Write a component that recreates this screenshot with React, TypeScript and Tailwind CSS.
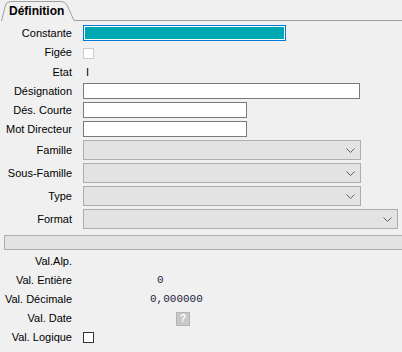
import React from 'react';

const labelFont = { fontFamily: '"Liberation Sans", Arial, sans-serif' };
const monoFont = { fontFamily: '"Liberation Mono", "Courier New", monospace' };

const Chevron: React.FC = () => (
  <svg width="9" height="5" viewBox="0 0 9 5" className="shrink-0">
    <path d="M0.5 0.5 L4.5 4.5 L8.5 0.5" fill="none" stroke="#606060" strokeWidth="1" />
  </svg>
);

const Row: React.FC<{ label: string; h: string; className?: string; children?: React.ReactNode }> = ({ label, h, className = '', children }) => (
  <div className={`flex items-center ${h} ${className}`}>
    <div className="w-[72px] shrink-0 text-right text-[11px] leading-none text-black">{label}</div>
    <div className="ml-[11px] flex items-center h-full">{children}</div>
  </div>
);

const Select: React.FC<{ w: string }> = ({ w }) => (
  <div className={`${w} h-[20px] bg-[#e3e3e3] border border-[#adadad] flex items-center justify-end pr-[5px]`}>
    <Chevron />
  </div>
);

const App: React.FC = () => {
  return (
    <div className="w-[402px] h-[352px] bg-[#f0f0f0] overflow-hidden relative" style={labelFont}>
      {/* Tab header */}
      <div className="flex h-[21px]">
        <div className="relative w-[75px] h-[21px] shrink-0">
          <svg width="75" height="21" viewBox="0 0 75 21" className="absolute inset-0">
            <path d="M1.5 21 L5.5 5 Q6.5 1.5 10.5 1.5 L61 1.5 Q65 1.5 67 5 L74 20.5 L75 20.5" fill="#f0f0f0" stroke="#a0a0a0" strokeWidth="1" />
          </svg>
          <span className="absolute left-[9px] top-[5px] text-[12px] font-bold leading-none text-black">Définition</span>
        </div>
        <div className="flex-1 border-b border-[#a0a0a0]" />
      </div>

      <div className="flex flex-col">
        <Row label="Constante" h="h-[16px]" className="mt-[4px]">
          <div className="w-[203px] h-[16px] border border-[#0078d7] bg-white p-[1px]">
            <div className="w-full h-full bg-[#00a8b4]" />
          </div>
        </Row>
        <Row label="Figée" h="h-[19px]" className="mt-[2px]">
          <div className="w-[11px] h-[11px] border border-[#cccccc] bg-white mt-[1px]" />
        </Row>
        <Row label="Etat" h="h-[20px]">
          <span className="text-[11px] leading-none text-black ml-[3px]">I</span>
        </Row>
        <Row label="Désignation" h="h-[16px]" className="mt-[1px]">
          <div className="w-[277px] h-[16px] border border-[#7a7a7a] bg-white" />
        </Row>
        <Row label="Dés. Courte" h="h-[16px]" className="mt-[3px]">
          <div className="w-[164px] h-[16px] border border-[#7a7a7a] bg-white" />
        </Row>
        <Row label="Mot Directeur" h="h-[16px]" className="mt-[3px]">
          <div className="w-[164px] h-[16px] border border-[#7a7a7a] bg-white" />
        </Row>
        <Row label="Famille" h="h-[20px]" className="mt-[3px]">
          <Select w="w-[278px]" />
        </Row>
        <Row label="Sous-Famille" h="h-[20px]" className="mt-[3px]">
          <Select w="w-[278px]" />
        </Row>
        <Row label="Type" h="h-[20px]" className="mt-[3px]">
          <Select w="w-[278px]" />
        </Row>
        <Row label="Format" h="h-[20px]" className="mt-[3px]">
          <Select w="w-[315px]" />
        </Row>

        <div className="ml-[4px] mt-[6px] h-[15px] w-[400px] bg-[#e3e3e3] border border-[#adadad]" />

        <div className="mt-[2px] flex flex-col">
          <Row label="Val.Alp." h="h-[19px]" />
          <Row label="Val. Entière" h="h-[19px]">
            <span className="ml-[74px] text-[11px] leading-none text-[#1c1c3c]" style={monoFont}>0</span>
          </Row>
          <Row label="Val. Décimale" h="h-[19px]">
            <span className="ml-[67px] text-[11px] leading-none text-[#1c1c3c]" style={monoFont}>0,000000</span>
          </Row>
          <Row label="Val. Date" h="h-[19px]">
            <div className="ml-[93px] w-[14px] h-[14px] bg-[#c8c8c8] border border-[#b4b4b4] flex items-center justify-center">
              <span className="text-[10px] font-bold leading-none text-white">?</span>
            </div>
          </Row>
          <Row label="Val. Logique" h="h-[19px]">
            <div className="w-[11px] h-[11px] border border-[#333333] bg-white" />
          </Row>
        </div>
      </div>
    </div>
  );
};

export default App;
